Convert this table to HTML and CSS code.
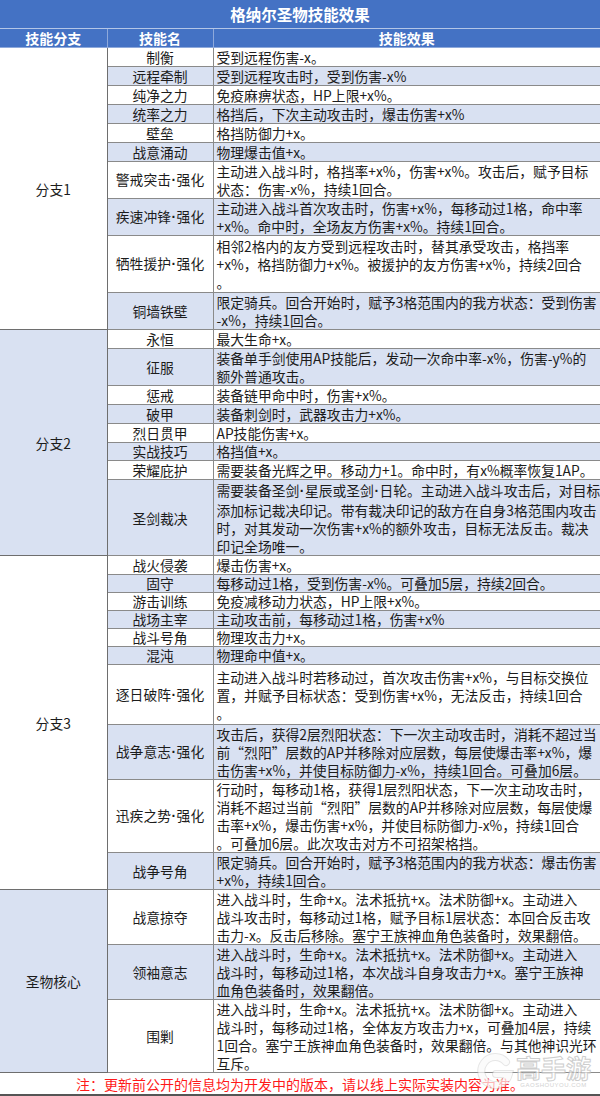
FILE: index.html
```html
<!DOCTYPE html>
<html lang="zh-CN">
<head>
<meta charset="utf-8">
<title>格纳尔圣物技能效果</title>
<link rel="stylesheet" href="styles.css">
</head>
<body>
<div class="sheet">
  <div class="title">格纳尔圣物技能效果</div>
  <table class="skills">
    <colgroup><col class="c-branch"><col class="c-name"><col class="c-effect"></colgroup>
    <thead>
      <tr><th>技能分支</th><th>技能名</th><th>技能效果</th></tr>
    </thead>
    <tbody>
      <tr><td class="branch b-white" rowspan="10">分支1</td><td class="name">制衡</td><td class="eff">受到远程伤害-x。</td></tr>
      <tr class="alt"><td class="name">远程牵制</td><td class="eff">受到远程攻击时，受到伤害-x%</td></tr>
      <tr><td class="name">纯净之力</td><td class="eff">免疫麻痹状态，HP上限+x%。</td></tr>
      <tr class="alt"><td class="name">统率之力</td><td class="eff">格挡后，下次主动攻击时，爆击伤害+x%</td></tr>
      <tr><td class="name">壁垒</td><td class="eff">格挡防御力+x。</td></tr>
      <tr class="alt"><td class="name">战意涌动</td><td class="eff">物理爆击值+x。</td></tr>
      <tr><td class="name">警戒突击<span class="dot">·</span>强化</td><td class="eff">主动进入战斗时，格挡率+x%，伤害+x%。攻击后，赋予目标<br>状态：伤害-x%，持续1回合。</td></tr>
      <tr class="alt"><td class="name">疾速冲锋<span class="dot">·</span>强化</td><td class="eff">主动进入战斗首次攻击时，伤害+x%，每移动过1格，命中率<br>+x%。命中时，全场友方伤害+x%。持续1回合。</td></tr>
      <tr class="h57"><td class="name">牺牲援护<span class="dot">·</span>强化</td><td class="eff">相邻2格内的友方受到远程攻击时，替其承受攻击，格挡率<br>+x%，格挡防御力+x%。被援护的友方伤害+x%，持续2回合<br>。</td></tr>
      <tr class="alt"><td class="name">铜墙铁壁</td><td class="eff">限定骑兵。回合开始时，赋予3格范围内的我方状态：受到伤害<br>-x%，持续1回合。</td></tr>

      <tr><td class="branch b-blue" rowspan="8">分支2</td><td class="name">永恒</td><td class="eff">最大生命+x。</td></tr>
      <tr class="alt"><td class="name">征服</td><td class="eff">装备单手剑使用AP技能后，发动一次命中率-x%，伤害-y%的<br>额外普通攻击。</td></tr>
      <tr><td class="name">惩戒</td><td class="eff">装备链甲命中时，伤害+x%。</td></tr>
      <tr class="alt"><td class="name">破甲</td><td class="eff">装备刺剑时，武器攻击力+x%。</td></tr>
      <tr><td class="name">烈日贯甲</td><td class="eff">AP技能伤害+x。</td></tr>
      <tr class="alt s18"><td class="name">实战技巧</td><td class="eff">格挡值+x。</td></tr>
      <tr><td class="name">荣耀庇护</td><td class="eff">需要装备光辉之甲。移动力+1。命中时，有x%概率恢复1AP。</td></tr>
      <tr class="alt h76"><td class="name">圣剑裁决</td><td class="eff">需要装备圣剑<span class="dot">·</span>星辰或圣剑<span class="dot">·</span>日轮。主动进入战斗攻击后，对目标<br>添加标记裁决印记。带有裁决印记的敌方在自身3格范围内攻击<br>时，对其发动一次伤害+x%的额外攻击，目标无法反击。裁决<br>印记全场唯一。</td></tr>

      <tr><td class="branch b-white" rowspan="10">分支3</td><td class="name">战火侵袭</td><td class="eff">爆击伤害+x。</td></tr>
      <tr class="alt s18"><td class="name">固守</td><td class="eff">每移动过1格，受到伤害-x%。可叠加5层，持续2回合。</td></tr>
      <tr class="s18"><td class="name">游击训练</td><td class="eff">免疫减移动力状态，HP上限+x%。</td></tr>
      <tr class="alt s18"><td class="name">战场主宰</td><td class="eff">主动攻击前，每移动过1格，伤害+x%</td></tr>
      <tr class="s18"><td class="name">战斗号角</td><td class="eff">物理攻击力+x。</td></tr>
      <tr class="alt s18"><td class="name">混沌</td><td class="eff">物理命中值+x。</td></tr>
      <tr class="h60"><td class="name">逐日破阵<span class="dot">·</span>强化</td><td class="eff">主动进入战斗时若移动过，首次攻击伤害+x%，与目标交换位<br>置，并赋予目标状态：受到伤害+x%，无法反击，持续1回合<br>。</td></tr>
      <tr class="alt"><td class="name">战争意志<span class="dot">·</span>强化</td><td class="eff">攻击后，获得2层烈阳状态：下一次主动攻击时，消耗不超过当<br>前“烈阳”层数的AP并移除对应层数，每层使爆击率+x%，爆<br>击伤害+x%，并使目标防御力-x%，持续1回合。可叠加6层。</td></tr>
      <tr><td class="name">迅疾之势<span class="dot">·</span>强化</td><td class="eff">行动时，每移动1格，获得1层烈阳状态，下一次主动攻击时，<br>消耗不超过当前“烈阳”层数的AP并移除对应层数，每层使爆<br>击率+x%，爆击伤害+x%，并使目标防御力-x%，持续1回合<br>。可叠加6层。此次攻击对方不可招架格挡。</td></tr>
      <tr class="alt"><td class="name">战争号角</td><td class="eff">限定骑兵。回合开始时，赋予3格范围内的我方状态：爆击伤害<br>+x%，持续1回合。</td></tr>

      <tr><td class="branch b-blue" rowspan="3">圣物核心</td><td class="name">战意掠夺</td><td class="eff">进入战斗时，生命+x。法术抵抗+x。法术防御+x。主动进入<br>战斗攻击时，每移动过1格，赋予目标1层状态：本回合反击攻<br>击力-x。反击后移除。塞宁王族神血角色装备时，效果翻倍。</td></tr>
      <tr class="alt"><td class="name">领袖意志</td><td class="eff">进入战斗时，生命+x。法术抵抗+x。法术防御+x。主动进入<br>战斗时，每移动过1格，本次战斗自身攻击力+x。塞宁王族神<br>血角色装备时，效果翻倍。</td></tr>
      <tr><td class="name">围剿</td><td class="eff">进入战斗时，生命+x。法术抵抗+x。法术防御+x。主动进入<br>战斗时，每移动过1格，全体友方攻击力+x，可叠加4层，持续<br>1回合。塞宁王族神血角色装备时，效果翻倍。与其他神识光环<br>互斥。</td></tr>
    </tbody>
  </table>
  <div class="note">注：更新前公开的信息均为开发中的版本，请以线上实际实装内容为准。</div>
  <div class="watermark">
    <svg class="wm-logo" width="38" height="38" viewBox="0 0 38 38">
      <path d="M30 10 A14 14 0 1 0 33 22 L20 22" fill="none" stroke="#bdbdbd" stroke-width="8" stroke-linecap="round" opacity="0.5"/>
      <path d="M30 10 A14 14 0 1 0 33 22 L20 22" fill="none" stroke="#ffffff" stroke-width="6" stroke-linecap="round" opacity="0.85"/>
    </svg>
    <div class="wm-text">
      <span class="wm-big">高手游</span>
      <span class="wm-small">GAOSHOUYOU.COM</span>
    </div>
  </div>
</div>
</body>
</html>
```
FILE: styles.css
```css
html, body {
  margin: 0;
  padding: 0;
  background: #ffffff;
}

.sheet {
  position: relative;
  width: 600px;
  height: 1096px;
  overflow: hidden;
  font-family: "Noto Sans CJK SC", "Noto Sans", sans-serif;
  color: #1c1c1c;
  font-size: 13.8px;
}

.dot {
  font-family: "Liberation Sans", sans-serif;
  font-weight: bold;
  padding: 0 0.5px;
}

.title {
  height: 28px;
  line-height: 28px;
  background: #4472c4;
  color: #ffffff;
  font-weight: bold;
  font-size: 15.5px;
  text-align: center;
  border-bottom: 1px solid #b4c6e7;
}

.skills {
  width: 600px;
  border-collapse: collapse;
  table-layout: fixed;
}

.c-branch { width: 107px; }
.c-name { width: 106px; }
.c-effect { width: 387px; }

.skills th {
  background: #4472c4;
  color: #ffffff;
  font-weight: bold;
  font-size: 14px;
  line-height: 18px;
  padding: 0;
  border: 1px solid #8ea9db;
  border-top: none;
  text-align: center;
}

.skills td {
  border: 1px solid #8a8a8a;
  padding: 0;
  line-height: 18px;
  vertical-align: middle;
  background: #ffffff;
}

.skills tr.s18 td { line-height: 17px; }
.skills tr.h57 { height: 57px; }
.skills tr.h60 { height: 60px; }
.skills tr.h76 { height: 76px; }

.skills tr.alt td {
  background: #d9e1f2;
}

.skills td.branch {
  text-align: center;
  border-color: #6e6e6e;
  line-height: 18px;
}

.skills td.b-white,
.skills tr.alt td.b-white { background: #ffffff; }
.skills td.b-blue,
.skills tr.alt td.b-blue { background: #d9e1f2; }

.skills td.name {
  text-align: center;
  white-space: nowrap;
  border-left-color: #6e6e6e;
}

.skills td.eff {
  padding-left: 3px;
  white-space: nowrap;
  overflow: hidden;
  border-left-color: #6e6e6e;
  border-right: none;
}

.skills th:first-child,
.skills td.branch {
  border-left: none;
}
.skills th:last-child { border-right: none; }

.note {
  height: 22px;
  line-height: 20px;
  text-align: center;
  color: #ff1a1a;
  font-size: 14px;
  border-bottom: 2px solid #555555;
  box-sizing: border-box;
  position: absolute;
  left: 0;
  right: 0;
  bottom: 0;
  background: #ffffff;
}

.watermark {
  position: absolute;
  left: 476px;
  top: 1052px;
  display: flex;
  align-items: center;
  gap: 2px;
  opacity: 0.75;
  white-space: nowrap;
}

.wm-text {
  display: flex;
  flex-direction: column;
  align-items: center;
}

.wm-big {
  font-size: 25px;
  line-height: 28px;
  font-weight: bold;
  color: rgba(255, 255, 255, 0.9);
  -webkit-text-stroke: 1px #bdbdbd;
  white-space: nowrap;
}

.wm-small {
  font-family: "Liberation Sans", sans-serif;
  font-size: 6px;
  line-height: 8px;
  color: #c4c4c4;
  letter-spacing: 0.5px;
  white-space: nowrap;
}
```
